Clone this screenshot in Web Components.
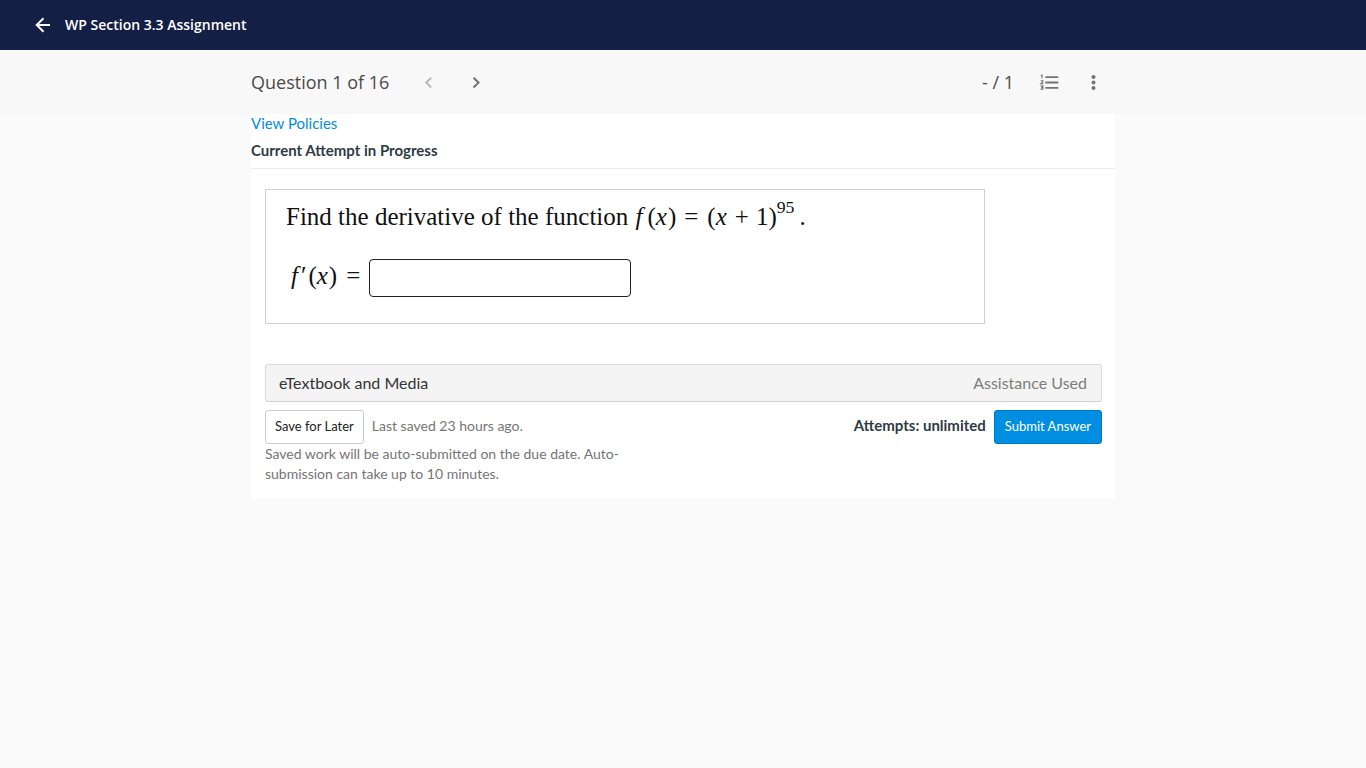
<!DOCTYPE html>
<html lang="en">
<head>
<meta charset="utf-8">
<meta name="viewport" content="width=device-width, initial-scale=1">
<title>WP Section 3.3 Assignment</title>
<style>
  body {
    margin: 0;
    min-height: 100vh;
    background: #fafafa;
    font: 15px/20px Lato, "Open Sans", sans-serif;
    color: #2d3b45;
  }
</style>
</head>
<body>
<app-header>WP Section 3.3 Assignment</app-header>
<main>
  <question-toolbar number="1" total="16" score="- / 1"></question-toolbar>
  <question-panel>
    <a slot="policies" href="#policies">View Policies</a>
    <span slot="status">Current Attempt in Progress</span>
    <math-question></math-question>
    <resource-bar note="Assistance Used">eTextbook and Media</resource-bar>
    <attempt-actions attempts="unlimited">
      <span slot="saved">Last saved 23 hours ago.</span>
      Saved work will be auto-submitted on the due date. Auto-submission can take up to 10 minutes.
    </attempt-actions>
  </question-panel>
</main>

<script>
const define = (name, markup, setup) => {
  const template = document.createElement('template');
  template.innerHTML = markup;

  customElements.define(name, class extends HTMLElement {
    constructor() {
      super();
      this.attachShadow({mode: 'open'}).append(template.content.cloneNode(true));
    }

    connectedCallback() {
      if (setup) {
        setup(this, this.shadowRoot);
      }
    }
  });
};

define('app-header', `
<style>
  :host {
    display: block;
    background: #141f45;
    color: #fff;
    font: 600 14px/20px "Open Sans", sans-serif;
  }
  header {
    display: flex;
    align-items: center;
    gap: 12px;
    height: 50px;
    padding: 0 33px;
  }
  a { display: flex; color: inherit; }
  h1 { margin: 0; font: inherit; }
</style>
<header>
  <a href="#back" aria-label="Back">
    <svg width="20" height="20" viewBox="0 0 20 20" fill="none" stroke="currentColor" stroke-width="2"><path d="M17 10H4M10.500 3.200L3.700 10l6.800 6.800"/></svg>
  </a>
  <h1><slot></slot></h1>
</header>
`);

define('question-toolbar', `
<style>
  :host {
    display: block;
    background: #f8f8f8;
    color: #4a4a4a;
    font: 18px/24px "Open Sans", sans-serif;
  }
  .inner {
    display: flex;
    align-items: center;
    justify-content: space-between;
    max-width: 864px;
    height: 64px;
    margin: 0 auto;
  }
  nav, .tools { display: flex; align-items: center; }
  h2 { margin: 0 28px 0 0; font: inherit; }
  nav button + button { margin-left: 23px; }
  .tools { gap: 20px; padding-right: 9px; }
  .score { margin-right: 4px; }
  button {
    display: flex;
    align-items: center;
    justify-content: center;
    width: 24px;
    height: 24px;
    padding: 0;
    border: 0;
    background: none;
    color: #737373;
  }
  button:disabled { color: #b8b8b8; }
</style>
<div class="inner">
  <nav aria-label="Questions">
    <h2></h2>
    <button disabled aria-label="Previous question">
      <svg width="24" height="24" viewBox="0 0 24 24" fill="none" stroke="currentColor" stroke-width="2"><path d="M14.200 7.700l-5 4.900 5 4.900"/></svg>
    </button>
    <button aria-label="Next question">
      <svg width="24" height="24" viewBox="0 0 24 24" fill="none" stroke="currentColor" stroke-width="2"><path d="M9.500 7.700l5 4.900-5 4.900"/></svg>
    </button>
  </nav>
  <div class="tools">
    <span class="score"></span>
    <button aria-label="Question list">
      <svg width="24" height="24" viewBox="0 0 24 24" fill="none" stroke="currentColor"><path stroke-width="1.800" d="M7.300 7.200h13M7.300 12.500h13M7.300 17.800h13"/><path stroke-width="1.100" d="M2.800 5.700l1.200-.7v3.600M2.600 10.700h2.300v1.200l-2.100 1.800h2.500M2.600 15.900h2.300v3.200h-2.400M3.100 17.500h1.600"/></svg>
    </button>
    <button aria-label="More options">
      <svg width="24" height="24" viewBox="0 0 24 24" fill="currentColor"><circle cx="11.500" cy="7" r="2"/><circle cx="11.500" cy="12.500" r="2"/><circle cx="11.500" cy="18" r="2"/></svg>
    </button>
  </div>
</div>
`, (host, root) => {
  root.querySelector('h2').textContent = `Question ${host.getAttribute('number')} of ${host.getAttribute('total')}`;
  root.querySelector('.score').textContent = host.getAttribute('score');
});

define('question-panel', `
<style>
  :host {
    display: block;
    max-width: 864px;
    margin: 0 auto;
    background: #fff;
  }
  header {
    display: grid;
    gap: 9px;
    padding-bottom: 9px;
    border-bottom: 1px solid #ebebeb;
    line-height: 18px;
  }
  ::slotted(a) { color: #008ee2; text-decoration: none; }
  h3 { margin: 0; font: inherit; font-weight: bold; }
  .body { padding: 20px 13px 15px 14px; }
</style>
<header>
  <div><slot name="policies"></slot></div>
  <h3><slot name="status"></slot></h3>
</header>
<div class="body"><slot></slot></div>
`);

define('math-question', `
<style>
  :host {
    display: block;
    box-sizing: border-box;
    max-width: 720px;
    margin-bottom: 40px;
    padding: 10px 20px 26px;
    border: 1px solid #d0d0d0;
    color: #111;
    font: 25px/34px "Liberation Serif", serif;
  }
  p { margin: 0 0 25px; }
  math { font-family: "Liberation Serif", serif; font-size: 25px; }
  mi { font-style: italic; }
  .answer { display: flex; align-items: flex-start; gap: 9px; padding-left: 5px; }
  label { white-space: nowrap; }
  input {
    box-sizing: border-box;
    width: 262px;
    min-width: 0;
    height: 38px;
    padding: 4px 8px;
    border: 1px solid #222;
    border-radius: 4px;
    background: #fff;
    font: inherit;
  }
</style>
<p>Find the derivative of the function <math><mspace width="1px"/><mi mathvariant="normal">f</mi><mspace width="5px"/><mo stretchy="false">(</mo><mi mathvariant="normal">x</mi><mspace width="1px"/><mo stretchy="false">)</mo><mo lspace="8px" rspace="9px">=</mo><mo stretchy="false">(</mo><mi mathvariant="normal">x</mi><mo lspace="8px" rspace="7px">+</mo><mn>1</mn><msup><mo stretchy="false">)</mo><mn>95</mn></msup></math>.</p>
<div class="answer">
  <label for="answer"><math><mi mathvariant="normal">f</mi><mspace width="3px"/><mo lspace="0" rspace="0">′</mo><mspace width="2px"/><mo stretchy="false">(</mo><mi mathvariant="normal">x</mi><mspace width="1px"/><mo stretchy="false">)</mo><mo lspace="9px" rspace="0">=</mo></math></label>
  <input id="answer" type="text">
</div>
`);

define('resource-bar', `
<style>
  :host {
    display: flex;
    justify-content: space-between;
    margin-bottom: 8px;
    padding: 8px 14px 8px 13px;
    border: 1px solid #dcdcdc;
    border-bottom-color: #d0d0d0;
    border-radius: 3px;
    background: #f4f4f4;
    color: #333;
    font-size: 16px;
  }
  .note { color: #7d7d7d; }
</style>
<span><slot></slot></span>
<span class="note"></span>
`, (host, root) => {
  root.querySelector('.note').textContent = host.getAttribute('note');
});

define('attempt-actions', `
<style>
  :host { display: block; color: #757575; font-size: 14px; }
  .row { display: flex; align-items: baseline; gap: 8px; }
  .attempts {
    margin-left: auto;
    color: #2d3b45;
    font-size: 15px;
    font-weight: bold;
  }
  button {
    height: 34px;
    padding: 0 9px 2px;
    border: 1px solid #c7cdd1;
    border-radius: 3px;
    background: #fff;
    color: #222;
    font: 13px/20px Lato, sans-serif;
  }
  .submit {
    padding: 0 10px 2px;
    border-color: #0079c1;
    background: #008ee2;
    color: #fff;
  }
  p { max-width: 380px; margin: 0; }
</style>
<div class="row">
  <button type="button">Save for Later</button>
  <slot name="saved"></slot>
  <span class="attempts"></span>
  <button type="submit" class="submit">Submit Answer</button>
</div>
<p><slot></slot></p>
`, (host, root) => {
  root.querySelector('.attempts').textContent = `Attempts: ${host.getAttribute('attempts')}`;
});
</script>
</body>
</html>
